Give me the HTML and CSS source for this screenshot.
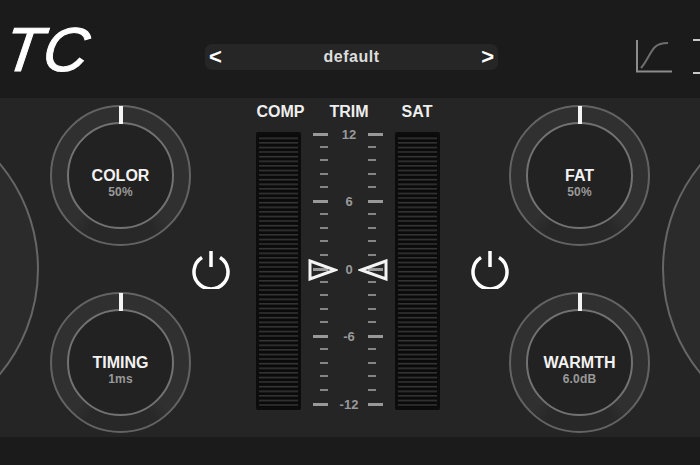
FILE: index.html
```html
<!DOCTYPE html>
<html lang="en">
<head>
    <meta charset="UTF-8">
    <meta name="viewport" content="width=device-width, initial-scale=1.0">
    <title>TC</title>
    <link rel="stylesheet" href="styles.css">
</head>
<body>
    <header class="top-bar">
        <div class="logo"><span class="logo-text">TC</span></div>
        <div class="preset">
            <span class="preset-arrow">&lt;</span>
            <span class="preset-name">default</span>
            <span class="preset-arrow">&gt;</span>
        </div>
        <div class="top-icons">
            <svg class="curve-icon" width="36" height="34" viewBox="0 0 36 34">
                <path class="axis" d="M1 1V32.500H36"/>
                <path class="curve" d="M5 29C11 22 14 13 19 8C22 5 26 4 32 4"/>
            </svg>
            <svg class="cut-icon" width="10" height="36" viewBox="0 0 10 36">
                <path class="axis" d="M0 1H10M0 34H10"/>
            </svg>
        </div>
    </header>

    <main class="panel">
        <div class="big-dial big-dial-left"></div>
        <div class="big-dial big-dial-right"></div>

        <div class="knob-col">
            <div class="knob">
                <div class="knob-face">
                    <div class="knob-name">COLOR</div>
                    <div class="knob-value">50%</div>
                </div>
                <div class="knob-mark"></div>
            </div>
            <div class="knob">
                <div class="knob-face">
                    <div class="knob-name">TIMING</div>
                    <div class="knob-value">1ms</div>
                </div>
                <div class="knob-mark"></div>
            </div>
        </div>

        <div class="power power-left">
            <svg width="38" height="40" viewBox="0 0 38 40">
                <path d="M10 8.500A17 17 0 1 0 28 8.500M19 2V18"/>
            </svg>
        </div>

        <section class="meters">
            <div class="meter-labels">
                <span>COMP</span>
                <span>TRIM</span>
                <span>SAT</span>
            </div>
            <div class="meter-row">
                <div class="meter"></div>
                <div class="scale" id="scale">
                    <svg class="trim-arrow trim-arrow-left" width="30" height="22" viewBox="0 0 30 22">
                        <path d="M2 2L27 11L2 20Z"/>
                    </svg>
                    <svg class="trim-arrow trim-arrow-right" width="30" height="22" viewBox="0 0 30 22">
                        <path d="M28 2L3 11L28 20Z"/>
                    </svg>
                </div>
                <div class="meter"></div>
            </div>
        </section>

        <div class="power power-right">
            <svg width="38" height="40" viewBox="0 0 38 40">
                <path d="M10 8.500A17 17 0 1 0 28 8.500M19 2V18"/>
            </svg>
        </div>

        <div class="knob-col">
            <div class="knob">
                <div class="knob-face">
                    <div class="knob-name">FAT</div>
                    <div class="knob-value">50%</div>
                </div>
                <div class="knob-mark"></div>
            </div>
            <div class="knob">
                <div class="knob-face">
                    <div class="knob-name">WARMTH</div>
                    <div class="knob-value">6.0dB</div>
                </div>
                <div class="knob-mark"></div>
            </div>
        </div>
    </main>

    <footer class="bottom-bar"></footer>

    <script>
        // Build the trim scale, a label every 5th row
        const scale = document.getElementById('scale');
        for (let i = 0; i <= 20; i++) {
            const isMajor = i % 5 === 0;
            const row = document.createElement('div');
            row.className = isMajor ? 'scale-row major' : 'scale-row';
            const label = isMajor ? String(12 - i / 5 * 6) : '';
            row.innerHTML = `<i class="tick"></i><span class="scale-num">${label}</span><i class="tick"></i>`;
            scale.appendChild(row);
        }
    </script>
</body>
</html>
```

FILE: styles.css
```css
html, body {
    margin: 0;
    padding: 0;
}
body {
    width: 700px;
    height: 465px;
    overflow: hidden;
    background: #1b1b1b;
    font-family: "Liberation Sans", Arial, sans-serif;
    color: #fff;
    display: flex;
    flex-direction: column;
}

/* top bar */
.top-bar {
    height: 98px;
    flex: none;
    display: flex;
    align-items: center;
    background: #1b1b1b;
    box-sizing: border-box;
    padding: 16px 0 0 5px;
    overflow: hidden;
}
.logo {
    width: 200px;
    flex: none;
    margin-top: -14px;
    font-style: italic;
    font-size: 62px;
    line-height: 60px;
    letter-spacing: 1px;
    color: #fff;
    -webkit-text-stroke: 1px #fff;
}
.logo-text {
    display: inline-block;
    transform: skewX(-8deg);
}
.preset {
    width: 293px;
    height: 26px;
    flex: none;
    box-sizing: border-box;
    padding: 0 4px;
    display: flex;
    align-items: center;
    justify-content: space-between;
    background: #262626;
    border-radius: 7px;
}
.preset-arrow {
    font-size: 22px;
    font-weight: bold;
}
.preset-name {
    font-size: 16px;
    font-weight: bold;
    letter-spacing: 0.5px;
    color: #ddd;
}
.top-icons {
    display: flex;
    gap: 21px;
    margin-left: 138px;
    flex: none;
}
.top-icons svg {
    flex: none;
    fill: none;
}
.axis {
    stroke: #8c8c8c;
    stroke-width: 2;
}
.curve {
    stroke: #6e6e6e;
    stroke-width: 2;
}
.cut-icon .axis {
    stroke: #c8c8c8;
}

/* main panel */
.panel {
    position: relative;
    height: 339px;
    flex: none;
    box-sizing: border-box;
    padding: 7px 0 0 50px;
    display: flex;
    overflow: hidden;
    background: #252525;
}
.big-dial {
    position: absolute;
    top: 6px;
    width: 330px;
    height: 330px;
    box-sizing: border-box;
    border: 2px solid #666;
    border-radius: 50%;
    background: #2b2b2b;
}
.big-dial-left {
    left: -291px;
}
.big-dial-right {
    left: 662px;
}

/* knobs */
.knob-col {
    width: 141px;
    flex: none;
    display: flex;
    flex-direction: column;
    gap: 46px;
}
.knob {
    position: relative;
    width: 141px;
    height: 141px;
    box-sizing: border-box;
    border: 2px solid #636363;
    border-radius: 50%;
    display: flex;
    align-items: center;
    justify-content: center;
    background: conic-gradient(#303030 0 135deg, #282828 150deg 210deg, #303030 225deg);
}
.knob-face {
    width: 107px;
    height: 107px;
    box-sizing: border-box;
    padding-top: 14px;
    border: 2px solid #727272;
    border-radius: 50%;
    background: #222;
    display: flex;
    flex-direction: column;
    align-items: center;
    justify-content: center;
}
.knob-name {
    font-size: 16px;
    font-weight: bold;
    line-height: 18px;
    color: #f2f2f2;
}
.knob-value {
    margin-top: 1px;
    font-size: 12px;
    font-weight: bold;
    letter-spacing: 0.2px;
    line-height: 13px;
    color: #999;
}
.knob-mark {
    position: absolute;
    top: -1px;
    left: 66.500px;
    width: 4px;
    height: 18px;
    background: #f4f4f4;
}

/* power switches */
.power {
    width: 38px;
    flex: none;
    padding-top: 144px;
}
.power-left {
    margin: 0 26px 0 1px;
}
.power-right {
    margin: 0 0 0 31px;
}
.power svg {
    display: block;
    fill: none;
    stroke: #fff;
    stroke-width: 3.500;
}

/* meters */
.meters {
    width: 184px;
    flex: none;
}
.meter-labels {
    height: 27px;
    display: grid;
    grid-template-columns: 49px 88px 48px;
    font-size: 16px;
    font-weight: bold;
    line-height: 14px;
    text-align: center;
    color: #eee;
}
.meter-row {
    display: flex;
    justify-content: space-between;
}
.meter {
    width: 45px;
    height: 278px;
    box-sizing: border-box;
    border: solid #0c0c0c;
    border-width: 3px;
    border-radius: 2px;
    background: repeating-linear-gradient(#0a0a0a 0, #0a0a0a 2px, #373737 3px, #141414 4.600px);
}
.scale {
    position: relative;
    width: 94px;
    height: 284px;
    margin-top: -5.500px;
    display: flex;
    flex-direction: column;
}
.scale-row {
    height: 13.500px;
    display: grid;
    grid-template-columns: 1fr 40px 1fr;
    align-items: center;
    justify-items: start;
    flex: none;
}
.scale-row .tick:first-child {
    justify-self: end;
}
.tick {
    display: block;
    width: 8px;
    height: 2px;
    background: #858585;
}
.major .tick {
    width: 15px;
    height: 3px;
    background: #999;
}
.scale-num {
    justify-self: center;
    padding-left: 2px;
    font-size: 13px;
    font-weight: bold;
    color: #999;
}
.trim-arrow {
    position: absolute;
    top: 132.500px;
    fill: none;
    stroke: #f4f4f4;
    stroke-width: 3;
}
.trim-arrow-left {
    left: 7px;
}
.trim-arrow-right {
    right: 7px;
}

.bottom-bar {
    flex: 1;
    background: #1b1b1b;
}
```
